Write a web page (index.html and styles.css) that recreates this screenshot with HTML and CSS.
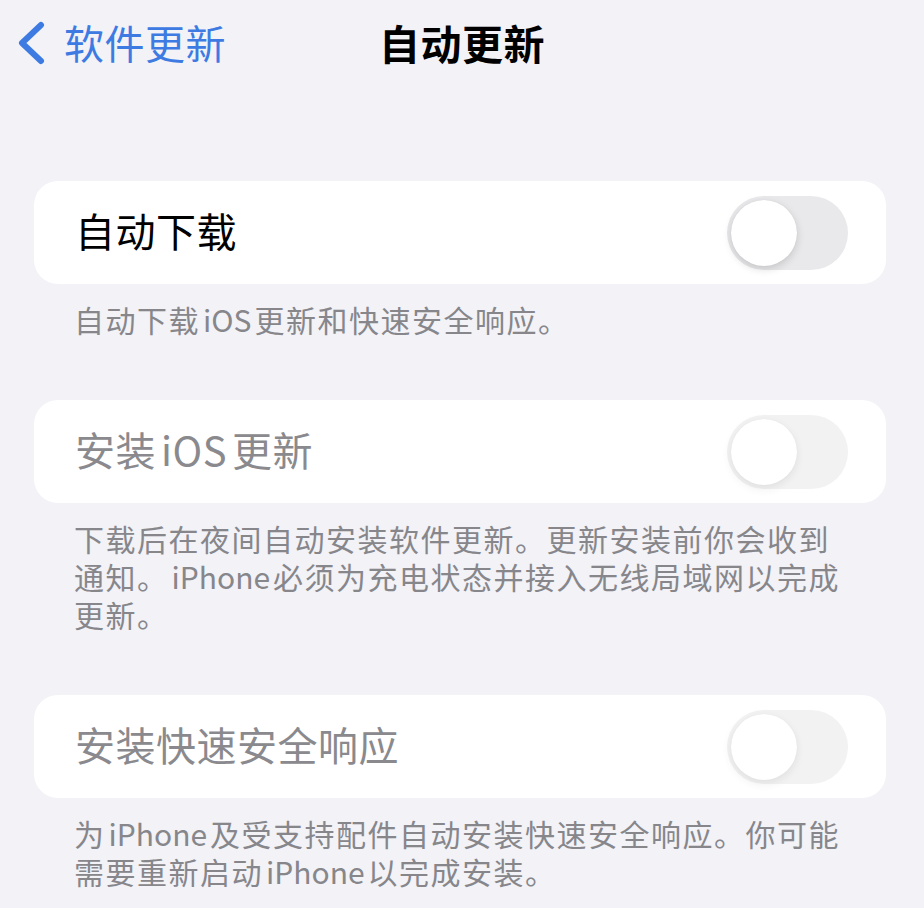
FILE: index.html
```html
<!DOCTYPE html>
<html lang="zh-CN">
<head>
    <meta charset="UTF-8">
    <meta name="viewport" content="width=device-width, initial-scale=1.0">
    <title>自动更新</title>
    <link rel="stylesheet" href="styles.css">
</head>
<body>
    <!-- Navigation bar -->
    <header class="nav-bar">
        <a href="#" class="back-link">
            <svg class="back-chevron" width="30" height="44" viewBox="0 0 30 44">
                <path d="M25 4 L6 22 L25 40" fill="none" stroke="currentColor" stroke-width="6" stroke-linecap="round" stroke-linejoin="round"/>
            </svg>
            <span>软件更新</span>
        </a>
        <h1 class="nav-title">自动更新</h1>
    </header>

    <main class="settings">
        <section class="group">
            <div class="cell">
                <span class="cell-label">自动下载</span>
                <span class="switch"><span class="knob"></span></span>
            </div>
            <p class="group-footer">自动下载<span class="latin">iOS</span>更新和快速安全响应。</p>
        </section>

        <section class="group disabled">
            <div class="cell">
                <span class="cell-label">安装<span class="latin">iOS</span>更新</span>
                <span class="switch"><span class="knob"></span></span>
            </div>
            <p class="group-footer">下载后在夜间自动安装软件更新。更新安装前你会收到通知。<span class="latin">iPhone</span>必须为充电状态并接入无线局域网以完成更新。</p>
        </section>

        <section class="group disabled">
            <div class="cell">
                <span class="cell-label">安装快速安全响应</span>
                <span class="switch"><span class="knob"></span></span>
            </div>
            <p class="group-footer">为<span class="latin">iPhone</span>及受支持配件自动安装快速安全响应。你可能需要重新启动<span class="latin">iPhone</span>以完成安装。</p>
        </section>
    </main>
</body>
</html>
```

FILE: styles.css
```css
body {
    margin: 0;
    padding: 0;
    background-color: #f2f2f7;
    font-family: "Noto Sans CJK SC", "Noto Sans", sans-serif;
    color: #000;
}

/* Navigation bar */
.nav-bar {
    position: relative;
    height: 90px;
    display: flex;
    align-items: center;
}

.back-link {
    display: flex;
    align-items: center;
    gap: 18px;
    padding-left: 16px;
    color: #3d7be3;
    text-decoration: none;
    font-size: 40px;
    letter-spacing: 0.5px;
    margin-top: -4px;
}

.back-link span {
    margin-top: -2px;
}

.back-chevron {
    display: block;
}

.nav-title {
    position: absolute;
    left: 0;
    right: 0;
    top: 0;
    margin: 0;
    line-height: 84px;
    text-align: center;
    font-size: 41px;
    font-weight: 700;
    letter-spacing: 0.5px;
    pointer-events: none;
}

/* Settings groups */
.settings {
    padding-top: 91px;
}

.group {
    margin: 0 38px 62px 34px;
}

.cell {
    height: 103px;
    display: flex;
    align-items: center;
    justify-content: space-between;
    padding: 0 38px 0 41px;
    background-color: #fff;
    border-radius: 24px;
}

.cell-label {
    font-size: 40px;
    letter-spacing: 0.5px;
    margin-bottom: 6px;
}

.cell-label .latin {
    margin: 0 5px;
}

.group-footer {
    margin: 0;
    padding: 16px 41px 0 40px;
    font-size: 30px;
    line-height: 38px;
    color: #86868b;
    letter-spacing: 1.5px;
}

.group-footer .latin {
    margin: 0 3px;
    letter-spacing: 0;
}

/* Toggle switch (off state) */
.switch {
    position: relative;
    width: 121px;
    height: 74px;
    border-radius: 37px;
    background-color: #e9e9eb;
    flex-shrink: 0;
}

.knob {
    position: absolute;
    left: 4px;
    top: 4px;
    width: 66px;
    height: 66px;
    border-radius: 50%;
    background-color: #fff;
    box-shadow: 0 3px 8px rgba(0, 0, 0, 0.15), 0 0 1px rgba(0, 0, 0, 0.1);
}

.disabled .cell-label {
    color: #8a8a8e;
}

.disabled .switch {
    opacity: 0.55;
}
```
